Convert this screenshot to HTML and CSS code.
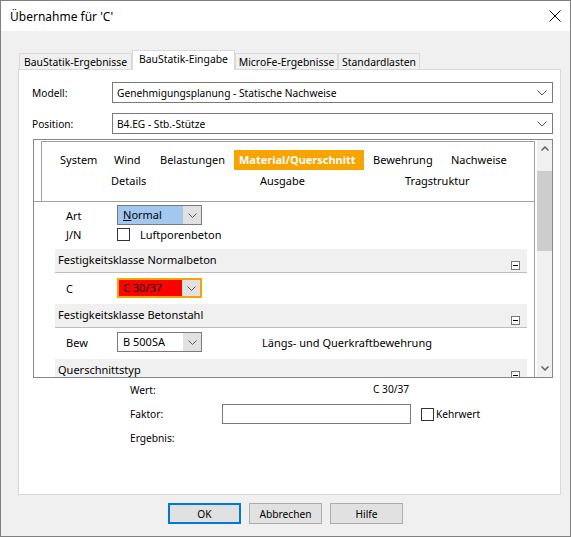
FILE: index.html
```html
<!DOCTYPE html>
<html lang="de">
<head>
<meta charset="utf-8">
<title>Übernahme für 'C'</title>
<link rel="stylesheet" href="styles.css">
</head>
<body>
<div class="window">
  <div class="titlebar">
    <span class="title">Übernahme für 'C'</span>
    <svg class="close" width="12" height="12" viewBox="0 0 12 12"><path d="M0.5 0.5 L11.5 11.5 M11.5 0.5 L0.5 11.5" stroke="#000" stroke-width="1" fill="none"/></svg>
  </div>
  <div class="dialog">
    <div class="tabs">
      <div class="tab t1">BauStatik-Ergebnisse</div>
      <div class="tab sel">BauStatik-Eingabe</div>
      <div class="tab t3">MicroFe-Ergebnisse</div>
      <div class="tab t4">Standardlasten</div>
    </div>
    <div class="page">
      <div class="field first">
        <span class="flabel">Modell:</span>
        <div class="combo wide"><span>Genehmigungsplanung - Statische Nachweise</span><svg class="chev" width="10" height="6" viewBox="0 0 10 6"><path d="M0.5 0.5 L5 5 L9.5 0.5" stroke="#555" fill="none"/></svg></div>
      </div>
      <div class="field second">
        <span class="flabel">Position:</span>
        <div class="combo wide"><span>B4.EG - Stb.-Stütze</span><svg class="chev" width="10" height="6" viewBox="0 0 10 6"><path d="M0.5 0.5 L5 5 L9.5 0.5" stroke="#555" fill="none"/></svg></div>
      </div>

      <div class="box">
        <div class="content">
          <div class="navwrap">
            <div class="nav">
              <div class="navrow1">
                <span class="navitem n-system">System</span>
                <span class="navitem n-wind">Wind</span>
                <span class="navitem n-bel">Belastungen</span>
                <span class="navitem active">Material/Querschnitt</span>
                <span class="navitem n-bew">Bewehrung</span>
                <span class="navitem n-nach">Nachweise</span>
              </div>
              <div class="navrow2">
                <span class="navitem">Details</span>
                <span class="navitem">Ausgabe</span>
                <span class="navitem">Tragstruktur</span>
              </div>
            </div>
          </div>

          <div class="prop r-art">
            <span class="plabel">Art</span>
            <div class="scombo blue"><span class="sval"><u>N</u>ormal</span><span class="sbtn"><svg width="9" height="5" viewBox="0 0 9 5"><path d="M0.5 0.5 L4.5 4.5 L8.5 0.5" stroke="#555" fill="none"/></svg></span></div>
          </div>
          <div class="prop r-jn">
            <span class="plabel">J/N</span>
            <span class="check"></span>
            <span class="ctext">Luftporenbeton</span>
          </div>

          <div class="section s1">
            <span class="stitle">Festigkeitsklasse Normalbeton</span>
            <svg class="minus" width="9" height="9" viewBox="0 0 9 9"><rect x="0.5" y="0.5" width="8" height="8" fill="#fff" stroke="#777"/><path d="M2 4.5 H7" stroke="#000"/></svg>
          </div>
          <div class="prop r-c">
            <span class="plabel">C</span>
            <div class="scombo red"><span class="sval">C 30/37</span><span class="sbtn"><svg width="9" height="5" viewBox="0 0 9 5"><path d="M0.5 0.5 L4.5 4.5 L8.5 0.5" stroke="#555" fill="none"/></svg></span></div>
          </div>

          <div class="section s2">
            <span class="stitle">Festigkeitsklasse Betonstahl</span>
            <svg class="minus" width="9" height="9" viewBox="0 0 9 9"><rect x="0.5" y="0.5" width="8" height="8" fill="#fff" stroke="#777"/><path d="M2 4.5 H7" stroke="#000"/></svg>
          </div>
          <div class="prop r-bew">
            <span class="plabel">Bew</span>
            <div class="scombo"><span class="sval">B 500SA</span><span class="sbtn"><svg width="9" height="5" viewBox="0 0 9 5"><path d="M0.5 0.5 L4.5 4.5 L8.5 0.5" stroke="#555" fill="none"/></svg></span></div>
            <span class="pdesc">Längs- und Querkraftbewehrung</span>
          </div>

          <div class="section s3">
            <span class="stitle">Querschnittstyp</span>
            <svg class="minus" width="9" height="9" viewBox="0 0 9 9"><rect x="0.5" y="0.5" width="8" height="8" fill="#fff" stroke="#777"/><path d="M2 4.5 H7" stroke="#000"/></svg>
          </div>
        </div>
        <div class="scrollbar">
          <div class="sb-btn"><svg width="8" height="5" viewBox="0 0 8 5"><path d="M0.5 4.5 L4 1 L7.5 4.5" stroke="#606060" stroke-width="1.5" fill="none"/></svg></div>
          <div class="sb-track"><div class="sb-thumb"></div></div>
          <div class="sb-btn"><svg width="8" height="5" viewBox="0 0 8 5"><path d="M0.5 0.5 L4 4 L7.5 0.5" stroke="#606060" stroke-width="1.5" fill="none"/></svg></div>
        </div>
      </div>

      <div class="calc">
        <span class="clabel">Wert:</span>
        <span class="cval">C 30/37</span>
        <span></span>
        <span class="clabel">Faktor:</span>
        <span class="input"></span>
        <span class="kehr"><span class="check"></span>Kehrwert</span>
        <span class="clabel">Ergebnis:</span>
        <span></span>
        <span></span>
      </div>
    </div>

    <div class="buttons">
      <span class="btn default">OK</span>
      <span class="btn">Abbrechen</span>
      <span class="btn">Hilfe</span>
    </div>
  </div>
</div>
</body>
</html>
```

FILE: styles.css
```css
* { box-sizing: border-box; }
html, body { margin: 0; padding: 0; }
body {
  width: 571px;
  height: 537px;
  font-family: "Noto Sans", "Liberation Sans", sans-serif;
  font-size: 10.2px;
  color: #000;
  background: #fff;
}
.window {
  width: 571px;
  height: 537px;
  border: 1px solid #808080;
  display: flex;
  flex-direction: column;
  background: #f0f0f0;
}
.titlebar {
  height: 30px;
  background: #fff;
  display: flex;
  align-items: center;
  justify-content: space-between;
  padding: 0 9px 0 9px;
}
.title { font-size: 12px; }
.close { display: block; }

.dialog {
  flex: 1;
  display: flex;
  flex-direction: column;
}

/* tabs */
.tabs {
  display: flex;
  align-items: flex-end;
  margin-top: 19px;
  margin-left: 18px;
  height: 20px;
}
.tab {
  height: 17px;
  border: 1px solid #d9d9d9;
  border-bottom: none;
  background: #f0f0f0;
  display: flex;
  align-items: center;
  justify-content: center;
  white-space: nowrap;
  font-size: 10.4px;
}
.t1 { width: 113px; }
.sel {
  width: 103px;
  height: 20px;
  background: #fff;
  position: relative;
  z-index: 2;
  padding-bottom: 3px;
}
.t3 { width: 103px; }
.t4 { width: 82px; }

/* tab page */
.page {
  position: relative;
  z-index: 1;
  margin-top: -1px;
  margin-left: 17px;
  width: 543px;
  height: 426px;
  background: #fff;
  border: 1px solid #d9d9d9;
  display: flex;
  flex-direction: column;
}
.field {
  display: flex;
  align-items: center;
  padding-left: 13px;
}
.field.first { margin-top: 12px; }
.field.second { margin-top: 10px; }
.flabel { width: 80px; }
.combo {
  height: 21px;
  border: 1px solid #7a7a7a;
  display: flex;
  align-items: center;
  justify-content: space-between;
  padding: 0 5px 0 4px;
}
.combo.wide { width: 441px; }
.chev { display: block; }

/* content box */
.box {
  margin-top: 5px;
  margin-left: 14px;
  width: 520px;
  height: 239px;
  border: 1px solid #828790;
  display: flex;
  overflow: hidden;
}
.content {
  width: 501px;
  height: 236px;
  margin-top: 1px;
  border-right: 1px solid #a0a0a0;
  overflow: hidden;
  flex: none;
  font-size: 11px;
}
.navwrap {
  border-bottom: 1px solid #a0a0a0;
}
.nav {
  margin-left: 7px;
  border-left: 1px solid #a0a0a0;
  border-top: 1px solid #a0a0a0;
  padding: 8px 0 10px 0;
}
.navrow1 {
  display: flex;
  height: 20px;
  align-items: center;
  padding-left: 13px;
}
.navitem {
  padding: 0 5px;
  height: 20px;
  line-height: 20px;
  white-space: nowrap;
}
.n-system { width: 54px; }
.n-wind { width: 46px; }
.n-bel { width: 79px; }
.active {
  background: #f7a300;
  color: #fff;
  font-weight: bold;
  width: 130px;
  margin-right: 4px;
}
.n-bew { width: 78px; }
.navrow2 {
  margin-top: 1px;
  display: grid;
  grid-template-columns: 149px 145px auto;
  padding-left: 64px;
  height: 20px;
}

.prop {
  display: flex;
  align-items: center;
  padding-left: 32px;
  height: 20px;
}
.r-art { margin-top: 3px; }
.r-jn { margin-top: 1px; height: 16px; }
.r-c { margin-top: 5px; }
.r-bew { margin-top: 4px; }
.plabel { width: 51px; }
.scombo {
  width: 85px;
  height: 20px;
  border: 1px solid #7a7a7a;
  display: flex;
  background: #fff;
}
.scombo .sval {
  flex: 1;
  padding-left: 5px;
  line-height: 18px;
}
.scombo .sbtn {
  width: 18px;
  background: #e1e1e1;
  display: flex;
  align-items: center;
  justify-content: center;
}
.scombo.blue .sval { background: #a3c8f0; }
.scombo.red {
  border: 2px solid #f7a300;
}
.scombo.red .sval { background: #ff0000; padding-left: 4px; line-height: 16px; }
.check {
  width: 13px;
  height: 13px;
  border: 1px solid #333;
  background: #fff;
  display: inline-block;
}
.ctext { margin-left: 10px; }
.pdesc { margin-left: 60px; }

.section {
  margin-left: 21px;
  width: 472px;
  height: 24px;
  background: #f0f0f0;
  border-bottom: 1px solid #bdbdbd;
  display: flex;
  justify-content: space-between;
  align-items: flex-end;
  padding: 0 7px 2px 3px;
}
.section .stitle { align-self: center; }
.s1 { margin-top: 7px; }
.s2 { margin-top: 6px; }
.s3 { margin-top: 7px; }
.minus { display: block; }

.scrollbar {
  width: 15px;
  margin-left: 2px;
  background: #f0f0f0;
  display: flex;
  flex-direction: column;
  flex: none;
}
.sb-btn {
  height: 17px;
  display: flex;
  align-items: center;
  justify-content: center;
}
.sb-track { flex: 1; }
.sb-thumb {
  margin-top: 14px;
  height: 80px;
  background: #cdcdcd;
}

/* calc area */
.calc {
  display: grid;
  grid-template-columns: 92px 199px auto;
  grid-template-rows: 20px 20px 20px;
  row-gap: 4px;
  margin-top: 2px;
  margin-left: 111px;
  align-items: center;
}
.cval { padding-left: 151px; white-space: nowrap; margin-top: -2px; }
.input {
  width: 189px;
  height: 20px;
  border: 1px solid #7a7a7a;
  background: #fff;
}
.kehr {
  display: flex;
  align-items: center;
  gap: 2px;
}

/* buttons */
.buttons {
  display: flex;
  justify-content: center;
  gap: 8px;
  margin-top: 8px;
}
.btn {
  width: 73px;
  height: 21px;
  border: 1px solid #adadad;
  background: #e1e1e1;
  display: flex;
  align-items: center;
  justify-content: center;
}
.btn.default { border: 2px solid #0078d7; }
```
